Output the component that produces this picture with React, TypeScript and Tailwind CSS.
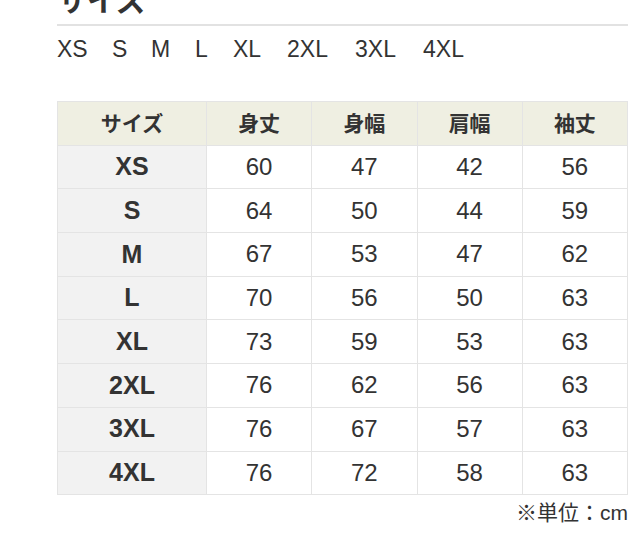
import React from 'react';

const rows = [
  { size: 'XS', values: [60, 47, 42, 56] },
  { size: 'S', values: [64, 50, 44, 59] },
  { size: 'M', values: [67, 53, 47, 62] },
  { size: 'L', values: [70, 56, 50, 63] },
  { size: 'XL', values: [73, 59, 53, 63] },
  { size: '2XL', values: [76, 62, 56, 63] },
  { size: '3XL', values: [76, 67, 57, 63] },
  { size: '4XL', values: [76, 72, 58, 63] },
];

const headers = ['サイズ', '身丈', '身幅', '肩幅', '袖丈'];

export default function App() {
  return (
    <div
      className="w-[640px] h-[545px] overflow-hidden bg-white text-[#333]"
      style={{ fontFamily: '"Liberation Sans", "Noto Sans CJK JP", sans-serif' }}
    >
      <div className="pl-[57px] w-[628px]">
        {/* Section heading */}
        <h2 className="mt-[-14px] text-[30px] leading-[30px] font-bold pb-[8px] border-b-2 border-[#e2e2e2]">
          サイズ
        </h2>

        {/* Size list */}
        <div className="flex text-[23px] leading-[23px] mt-[12px]">
          <span className="w-[55px]">XS</span>
          <span className="w-[39px]">S</span>
          <span className="w-[44px]">M</span>
          <span className="w-[38px]">L</span>
          <span className="w-[54px]">XL</span>
          <span className="w-[68px]">2XL</span>
          <span className="w-[68px]">3XL</span>
          <span>4XL</span>
        </div>

        {/* Size table */}
        <table className="mt-[40px] w-[571px] border-collapse table-fixed">
          <thead>
            <tr>
              {headers.map((h, i) => (
                <th
                  key={h}
                  className={`bg-[#efefe2] border border-[#e4e4e4] h-[43.7px] p-0 text-[21px] font-bold text-center ${
                    i === 0 ? 'w-[149px]' : ''
                  }`}
                >
                  {h}
                </th>
              ))}
            </tr>
          </thead>
          <tbody>
            {rows.map((row) => (
              <tr key={row.size}>
                <td className="bg-[#f2f2f2] border border-[#e4e4e4] h-[43.7px] p-0 text-[25px] font-bold text-center">
                  {row.size}
                </td>
                {row.values.map((v, i) => (
                  <td
                    key={i}
                    className="bg-white border border-[#e4e4e4] h-[43.7px] p-0 text-[24px] text-center"
                  >
                    {v}
                  </td>
                ))}
              </tr>
            ))}
          </tbody>
        </table>

        <p className="text-right text-[21px] leading-[21px] mt-[7px]">※単位：cm</p>
      </div>
    </div>
  );
}
